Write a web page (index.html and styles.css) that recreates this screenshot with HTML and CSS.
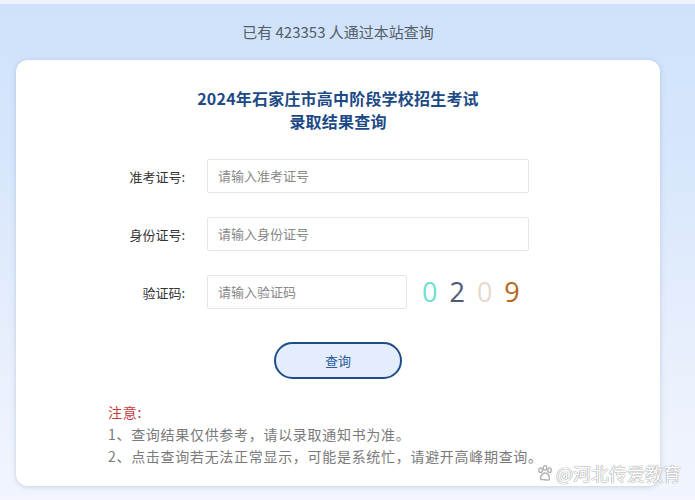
FILE: index.html
```html
<!DOCTYPE html>
<html lang="zh">
<head>
<meta charset="utf-8">
<link rel="stylesheet" href="styles.css">
</head>
<body>
<div class="page">
  <div class="topline"></div>
  <div class="counter">已有 423353 人通过本站查询</div>
  <div class="card">
    <h1 class="title">2024年石家庄市高中阶段学校招生考试<br>录取结果查询</h1>
    <div class="form">
      <div class="row">
        <label class="label">准考证号:</label>
        <div class="input wide">请输入准考证号</div>
      </div>
      <div class="row">
        <label class="label">身份证号:</label>
        <div class="input wide">请输入身份证号</div>
      </div>
      <div class="row">
        <label class="label">验证码:</label>
        <div class="input narrow">请输入验证码</div>
        <div class="captcha"><span class="c1">0</span><span class="c2">2</span><span class="c3">0</span><span class="c4">9</span></div>
      </div>
    </div>
    <div class="btnwrap"><button class="btn">查询</button></div>
    <div class="notes">
      <div class="notice">注意:</div>
      <div class="note">1、查询结果仅供参考，请以录取通知书为准。</div>
      <div class="note">2、点击查询若无法正常显示，可能是系统忙，请避开高峰期查询。</div>
    </div>
  </div>
  <div class="watermark">
    <svg class="paw" width="18" height="18" viewBox="0 0 16 16"><g fill="none" stroke="#b0b0b0" stroke-width="1.2"><ellipse cx="4" cy="5.5" rx="1.6" ry="2"/><ellipse cx="8" cy="3.5" rx="1.6" ry="2"/><ellipse cx="12" cy="5.5" rx="1.6" ry="2"/><path d="M4 13c0-3 2-5 4-5s4 2 4 5c0 1.5-2 1.5-4 1s-4 .5-4-1z"/></g></svg>
    <span>@河北传爱教育</span>
  </div>
</div>
</body>
</html>
```
FILE: styles.css
```css
html, body {
  margin: 0;
  padding: 0;
}
body {
  width: 695px;
  height: 500px;
  overflow: hidden;
  font-family: "Noto Sans CJK SC", "Liberation Sans", sans-serif;
}
.page {
  position: relative;
  height: 500px;
  background: linear-gradient(180deg, #cfe2fb 0%, #d6e6fc 30%, #e8effc 70%, #f2f5fd 100%);
}
.topline {
  height: 4px;
  background: #eef3fb;
}
.counter {
  height: 56px;
  padding-top: 3px;
  line-height: 56px;
  margin: -3px 35px 0 16px;
  text-align: center;
  font-size: 15px;
  color: #555c66;
}
.card {
  margin: 0 35px 0 16px;
  height: 426px;
  box-sizing: border-box;
  background: #fff;
  border-radius: 12px;
  box-shadow: 0 1px 5px rgba(120, 140, 170, 0.35);
  padding-top: 27px;
}
.title {
  margin: 0;
  text-align: center;
  font-size: 16px;
  line-height: 23px;
  font-weight: 700;
  color: #1d4a86;
  letter-spacing: 0.2px;
}
.form {
  margin-top: 26px;
  display: flex;
  flex-direction: column;
  gap: 24px;
}
.row {
  display: flex;
  align-items: center;
  height: 34px;
}
.label {
  width: 191px;
  text-align: right;
  font-size: 13px;
  color: #333;
  padding-right: 22px;
  box-sizing: border-box;
}
.input {
  height: 34px;
  box-sizing: border-box;
  border: 1px solid #e6e6e6;
  border-radius: 2px;
  padding-left: 10px;
  font-size: 13px;
  line-height: 32px;
  color: #888;
}
.wide { width: 322px; }
.narrow { width: 200px; }
.captcha {
  display: flex;
  gap: 12px;
  margin-left: 15px;
  font-family: "Open Sans", "DejaVu Sans", sans-serif;
  font-size: 27px;
  line-height: 34px;
}
.c1 { color: #6ee0cf; }
.c2 { color: #4e5a73; }
.c3 { color: #e6d8cc; }
.c4 { color: #b8661a; }
.btnwrap {
  margin-top: 33px;
  display: flex;
  justify-content: center;
}
.btn {
  width: 128px;
  height: 37px;
  border: 2px solid #1f4e86;
  border-radius: 19px;
  background: #e3edfc;
  color: #2a5a9a;
  font-family: "Noto Sans CJK SC", sans-serif;
  font-size: 13px;
}
.notes {
  margin-top: 22px;
  padding-left: 92px;
  font-size: 14px;
  line-height: 22px;
  letter-spacing: 0.7px;
}
.notice { color: #c8383b; }
.note { color: #7a7a7a; }
.watermark {
  position: absolute;
  right: 14px;
  top: 460px;
  display: flex;
  align-items: center;
  gap: 2px;
  font-size: 18px;
  color: #fff;
  text-shadow: 0 0 1px #888, 0 0 1px #888;
}
```
